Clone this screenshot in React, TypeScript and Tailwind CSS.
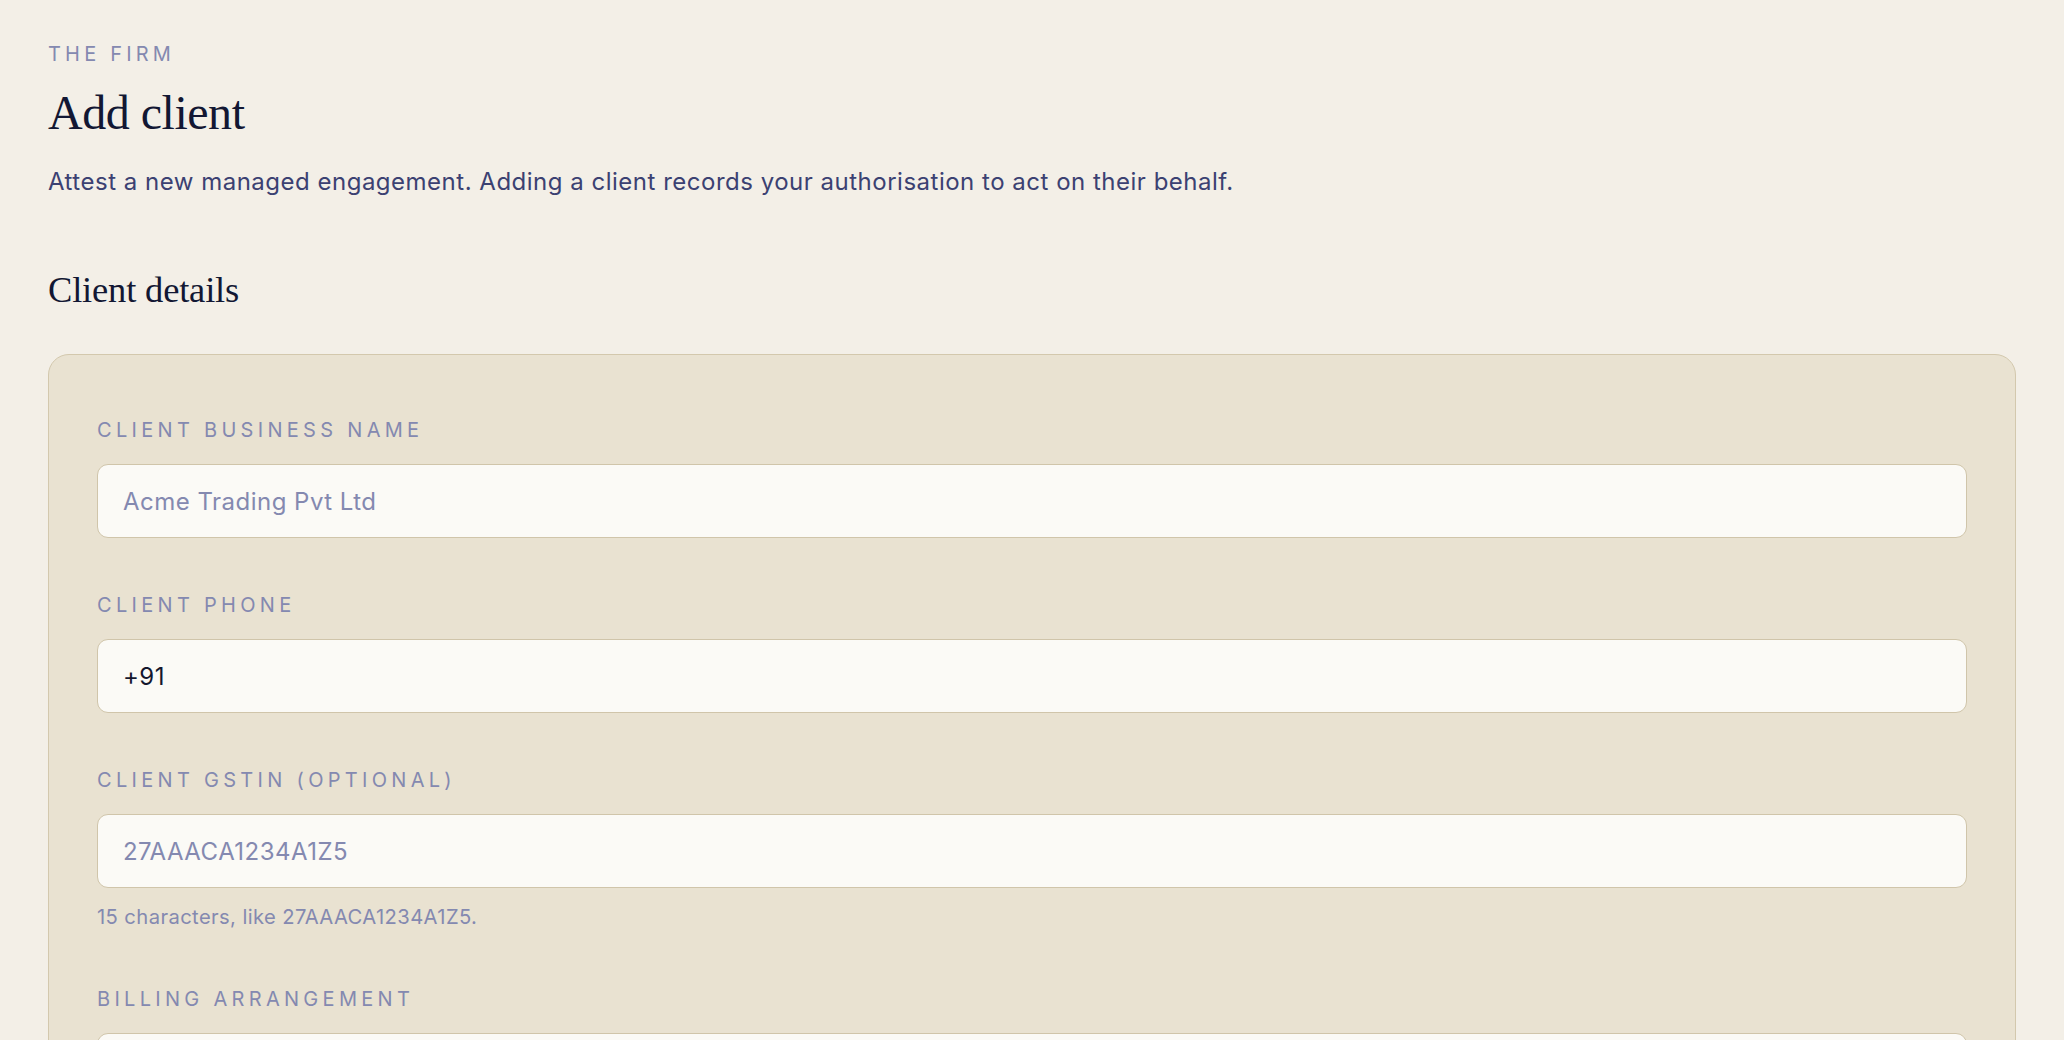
import { useState } from 'react';

type FieldProps = {
  label: string;
  placeholder?: string;
  value?: string;
  hint?: string;
};

function Field({ label, placeholder, value, hint }: FieldProps) {
  const [text, setText] = useState(value ?? '');
  return (
    <div className="flex flex-col">
      <label className="text-[20px] leading-[28px] tracking-[0.215em] uppercase text-[#8489b0]">{label}</label>
      <input
        value={text}
        onChange={(e) => setText(e.target.value)}
        placeholder={placeholder}
        className="mt-[20px] h-[74px] w-full rounded-[11px] border-[1.5px] border-[#d0c5aa] bg-[#fbfaf6] px-[25px] text-[24px] tracking-[0.02em] text-[#14172e] placeholder:text-[#8489b0] outline-none"
      />
      {hint && <p className="mt-[14px] text-[20.2px] leading-[30px] tracking-[0.02em] text-[#8489b0]">{hint}</p>}
    </div>
  );
}

export default function App() {
  return (
    <div className="min-h-screen bg-[#f3efe7] px-12 pt-[40px] pb-16 font-['Inter','Noto_Sans',sans-serif]">
      <p className="text-[20px] leading-[28px] tracking-[0.21em] uppercase text-[#8489b0]">The firm</p>
      <h1 className="mt-[18px] font-['Liberation_Serif',serif] text-[48px] leading-[53px] tracking-[-0.01em] text-[#121733]">Add client</h1>
      <p className="mt-[25px] text-[24px] leading-[36px] tracking-[0.021em] text-[#3b4172]">
        Attest a new managed engagement. Adding a client records your authorisation to act on their behalf.
      </p>

      <h2 className="mt-[68px] font-['Liberation_Serif',serif] text-[36.5px] leading-[44px] tracking-[-0.005em] text-[#121733]">Client details</h2>

      <div className="mt-[42px] rounded-[21px] border-[1.5px] border-[#d3c8ad] bg-[#e9e2d1] px-[48px] pt-[61px] pb-[56px] flex flex-col gap-[53px]">
        <Field label="Client business name" placeholder="Acme Trading Pvt Ltd" />
        <Field label="Client phone" value="+91" />
        <Field label="Client GSTIN (optional)" placeholder="27AAACA1234A1Z5" hint="15 characters, like 27AAACA1234A1Z5." />
        <Field label="Billing arrangement" placeholder="" />
      </div>
    </div>
  );
}
